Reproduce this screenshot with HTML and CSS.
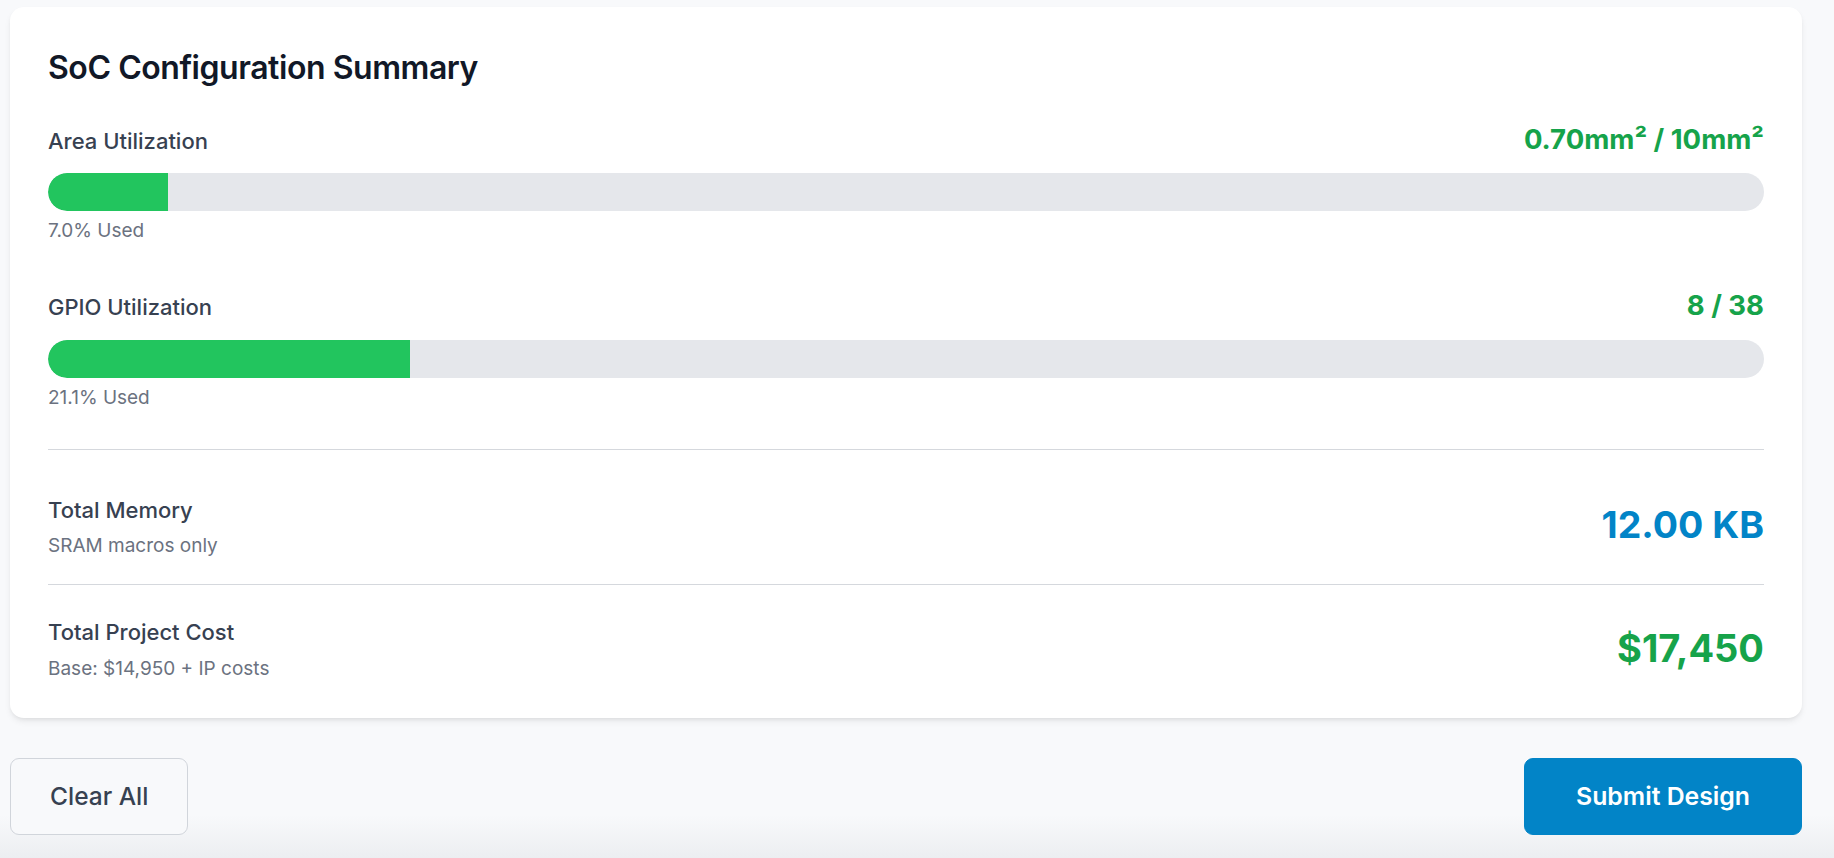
FILE: index.html
```html
<!DOCTYPE html>
<html lang="en">
<head>
<meta charset="utf-8">
<title>SoC Configuration Summary</title>
<link rel="stylesheet" href="styles.css">
</head>
<body>
<div class="page">
  <section class="card">
    <h2 class="card-title">SoC Configuration Summary</h2>

    <div class="metric">
      <div class="metric-head">
        <span class="metric-label">Area Utilization</span>
        <span class="metric-value">0.70mm² / 10mm²</span>
      </div>
      <div class="track"><div class="fill" style="width:7%"></div></div>
      <div class="metric-note">7.0% Used</div>
    </div>

    <div class="metric metric-gpio">
      <div class="metric-head">
        <span class="metric-label">GPIO Utilization</span>
        <span class="metric-value">8 / 38</span>
      </div>
      <div class="track"><div class="fill" style="width:21.1%"></div></div>
      <div class="metric-note">21.1% Used</div>
    </div>

    <div class="total total-memory">
      <div class="total-text">
        <div class="total-label">Total Memory</div>
        <div class="total-note">SRAM macros only</div>
      </div>
      <div class="total-value value-blue">12.00 KB</div>
    </div>

    <div class="total total-cost">
      <div class="total-text">
        <div class="total-label">Total Project Cost</div>
        <div class="total-note">Base: $14,950 + IP costs</div>
      </div>
      <div class="total-value value-green">$17,450</div>
    </div>
  </section>

  <div class="actions">
    <button class="btn btn-secondary" type="button">Clear All</button>
    <button class="btn btn-primary" type="button">Submit Design</button>
  </div>
</div>
</body>
</html>
```

FILE: styles.css
```css
* {
  box-sizing: border-box;
}

html {
  background: #f8f9fb;
}

body {
  margin: 0;
  min-height: 100vh;
  font-family: Inter, "Noto Sans", "Liberation Sans", sans-serif;
  color: #374151;
  background: linear-gradient(to bottom, #f8f9fb 0, #f8f9fb 815px, #eceef1 858px);
}

.page {
  width: 1792px;
  margin-left: 10px;
  padding-top: 7px;
}

.card {
  background: #ffffff;
  border-radius: 14px;
  box-shadow: 0 4px 7px -1px rgba(0, 0, 0, 0.08), 0 2px 5px -2px rgba(0, 0, 0, 0.08);
  padding: 41px 38px 36px;
}

.card-title {
  margin: 0 0 33px;
  font-size: 32px;
  line-height: 40px;
  font-weight: 600;
  color: #111827;
  letter-spacing: -0.45px;
}

.metric-gpio {
  margin-top: 43px;
}

.metric-head {
  display: flex;
  justify-content: space-between;
  align-items: baseline;
  height: 36px;
}

.metric-label {
  font-size: 22px;
  line-height: 30px;
  font-weight: 500;
  color: #374151;
}

.metric-value {
  font-size: 27.5px;
  line-height: 36px;
  font-weight: 700;
  color: #16a34a;
}

.track {
  margin-top: 16px;
  height: 38px;
  border-radius: 19px;
  background: #e5e7eb;
  overflow: hidden;
}

.metric-gpio .track {
  margin-top: 17px;
}

.fill {
  height: 100%;
  background: #22c55e;
  border-radius: 19px 0 0 19px;
}

.metric-note {
  margin-top: 7px;
  font-size: 19px;
  line-height: 26px;
  color: #6b7280;
}

.total {
  display: flex;
  justify-content: space-between;
  align-items: center;
}

.total-memory {
  margin-top: 38px;
  border-top: 1px solid #d5d8dd;
  border-bottom: 1px solid #d5d8dd;
  padding: 45px 0 25px;
}

.total-cost {
  padding-top: 32px;
}

.total-label {
  font-size: 22px;
  line-height: 30px;
  font-weight: 500;
  color: #374151;
}

.total-note {
  margin-top: 8px;
  font-size: 19px;
  line-height: 26px;
  color: #6b7280;
}

.total-cost .total-note {
  margin-top: 9px;
}

.total-value {
  font-size: 38px;
  line-height: 46px;
  font-weight: 700;
  margin-bottom: 4px;
}

.value-blue {
  font-size: 37.5px;
  color: #0284c7;
}

.value-green {
  color: #16a34a;
}

.actions {
  margin-top: 40px;
  display: flex;
  justify-content: space-between;
  align-items: center;
}

.btn {
  font-family: Inter, "Noto Sans", "Liberation Sans", sans-serif;
  line-height: 29px;
  height: 77px;
  border-radius: 9px;
  cursor: pointer;
}

.btn-secondary {
  padding: 0 39px;
  font-size: 24.5px;
  background: #f8f9fb;
  border: 1px solid #d1d5db;
  color: #374151;
  font-weight: 500;
}

.btn-primary {
  padding: 0 51px;
  font-size: 24.8px;
  background: #0284c7;
  border: 1px solid #0284c7;
  color: #ffffff;
  font-weight: 600;
}
```
